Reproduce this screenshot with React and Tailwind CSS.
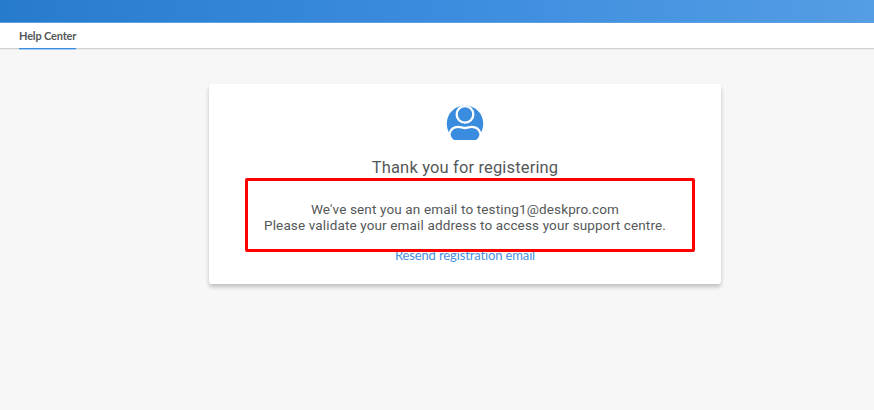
function UserIcon() {
  return (
    <svg className="h-[37px] w-[38px]" viewBox="0 0 38 37" fill="none">
      <path
        d="M3.5 29.5C1.7 26.6 .8 23.2 .8 19.5C.8 9.4 9 1.5 19 1.5S37.2 9.4 37.2 19.5C37.2 23.2 36.3 26.6 34.5 29.5Z"
        fill="#3a8dde"
      />
      <path
        d="M3.4 30C4.6 25.2 8 22.9 12.3 22.9C15 22.9 16.3 24 19 24S23 22.9 25.7 22.9C30 22.9 33.4 25.2 34.6 30C34.6 33 32 37.2 29.5 37.2H8.5C6 37.2 3.4 33 3.4 30Z"
        fill="#3a8dde"
        stroke="#fff"
        strokeWidth="2.3"
      />
      <circle cx="19" cy="10.4" r="8.3" fill="#3a8dde" stroke="#fff" strokeWidth="2.3" />
    </svg>
  );
}

export default function App() {
  return (
    <div className="flex h-[410px] w-full flex-col overflow-hidden bg-[#f7f7f7] text-[#555859]">
      <header className="h-[23px] shrink-0 border-b border-[#5c9fe3] bg-linear-to-r from-[#277bcd] via-[#3b8cde] to-[#559de4]" />
      <nav className="flex h-[26px] shrink-0 border-b border-[#ccd3d0] bg-white pl-[19px] shadow-[0_1px_0_#e9eceb]">
        <a className="h-[26px] w-[57px] border-b border-[#3a8dde] pt-[5px] font-['Lato',sans-serif] text-[11px] leading-4 font-bold tracking-[-0.16px] whitespace-nowrap shadow-[0_1px_0_#a9cdf0]">
          Help Center
        </a>
      </nav>
      <main className="flex justify-center pt-[35px] pl-[56px]">
        <section className="relative flex h-[200px] w-[512px] flex-col items-center rounded-[3px] bg-white pt-[20px] shadow-[0_3px_4px_rgba(0,0,0,0.22)] font-['Roboto',sans-serif]">
          <UserIcon />
          <h1 className="mt-[16px] text-[16.5px] leading-[22px] tracking-[0.15px] whitespace-nowrap">
            Thank you for registering
          </h1>
          <p className="mt-[22px] text-center text-[13.5px] leading-[16px] tracking-[0.14px] whitespace-nowrap">
            We've sent you an email to testing1@deskpro.com
            <br />
            Please validate your email address to access your support centre.
          </p>
          <a className="mt-[14px] font-['Lato',sans-serif] text-[13px] leading-4 tracking-[-0.13px] whitespace-nowrap text-[#4790df]">
            Resend registration email
          </a>
          <div className="absolute top-[94px] left-[36px] h-[74px] w-[450px] rounded-[2px] border-3 border-[#fe0000]" />
        </section>
      </main>
    </div>
  );
}
